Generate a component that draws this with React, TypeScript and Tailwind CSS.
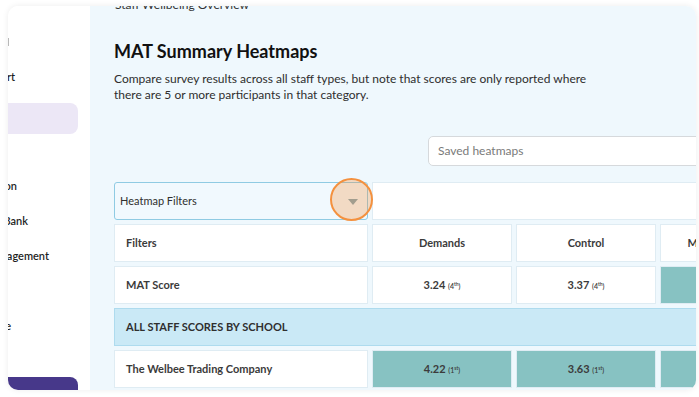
import type { ReactNode } from 'react';

const font = { fontFamily: 'Lato, "Open Sans", sans-serif' };

function SideItem({ label, end }: { label: string; end: number }) {
  return (
    <div className="flex h-[35px] shrink-0 items-center">
      <div className="flex justify-end whitespace-nowrap" style={{ width: end }}>
        <span className="text-[11px] font-semibold text-[#1f1f1f]">{label}</span>
      </div>
    </div>
  );
}

function Cell({
  children,
  className = '',
}: {
  children?: ReactNode;
  className?: string;
}) {
  return (
    <div
      className={`flex h-full shrink-0 items-center border border-[#dfecf3] text-[11px] font-bold text-[#3b3b3b] ${className}`}
    >
      {children}
    </div>
  );
}

function Score({ value, rank, sfx }: { value: string; rank: string; sfx: string }) {
  return (
    <span className="whitespace-nowrap">
      {value}{' '}
      <span className="text-[7px] font-semibold">
        ({rank}
        <sup className="text-[5px]">{sfx}</sup>)
      </span>
    </span>
  );
}

export default function App() {
  return (
    <div className="h-[397px] w-[699px] overflow-hidden bg-white pl-[8px] pt-[6px]" style={font}>
      <div className="flex h-[384px] w-[688px] overflow-hidden rounded-[10px] shadow-[0_0_6px_rgba(0,0,0,0.08)]">
        {/* sidebar */}
        <aside className="flex w-[82px] shrink-0 flex-col bg-white">
          <div className="h-[54px] shrink-0 pt-[32px]">
            <div className="h-[8px] w-[1px] bg-[#b8b8b8]" />
          </div>
          <SideItem label="Report" end={7} />
          <div className="mr-[12px] mt-[8px] h-[31px] shrink-0 rounded-r-[8px] bg-[#ece7f6]" />
          <SideItem label="" end={0} />
          <SideItem label="Action" end={9} />
          <SideItem label="Question Bank" end={20} />
          <SideItem label="Staff Management" end={41} />
          <SideItem label="" end={0} />
          <SideItem label="Invite" end={3} />
          <div className="mr-[12px] mt-[33px] h-[30px] shrink-0 rounded-r-[8px] bg-[#47388a]" />
        </aside>

        {/* main */}
        <main className="min-w-0 flex-1 overflow-hidden bg-[#eff8fd] pl-[24px]">
          <div className="mt-[-9px] whitespace-nowrap pl-[1px] text-[12px] leading-[16px] text-[#333]">
            Staff Wellbeing Overview
          </div>
          <h1 className="mt-[27px] whitespace-nowrap text-[18px] font-bold leading-[22px] text-[#111]">
            MAT Summary Heatmaps
          </h1>
          <p className="mt-[9px] whitespace-nowrap text-[12px] leading-[16px] text-[#2e2e2e]">
            Compare survey results across all staff types, but note that scores are only reported where
            <br />
            there are 5 or more participants in that category.
          </p>

          <div className="ml-[314px] mt-[33px] flex h-[30px] w-[320px] items-center rounded-[5px] border border-[#d6d9dc] bg-white pl-[9px] text-[12px] text-[#7a7a7a]">
            Saved heatmaps
          </div>

          <div className="mt-[16px] flex w-[700px] flex-col gap-[4px]">
            <div className="flex h-[38px] gap-[4px]">
              <div className="relative flex w-[254px] shrink-0 items-center rounded-[3px] border border-[#8fcbe3] bg-[#f1f9fe] pl-[5px] text-[11px] text-[#2f2f2f]">
                Heatmap Filters
                <span className="absolute right-[9px] top-[16px] h-0 w-0 border-x-[5px] border-t-[6px] border-x-transparent border-t-[#7ea3b1]" />
                <span className="absolute right-[-6px] top-[-5px] h-[43px] w-[43px] rounded-full border-2 border-[#f4913f] bg-[#f4913f]/30" />
              </div>
              <div className="h-full flex-1 border border-[#dfecf3] bg-white" />
            </div>

            <div className="flex h-[38px] gap-[4px]">
              <Cell className="w-[254px] bg-white pl-[11px]">Filters</Cell>
              <Cell className="w-[140px] justify-center bg-white">Demands</Cell>
              <Cell className="w-[140px] justify-center bg-white">Control</Cell>
              <Cell className="w-[140px] justify-center bg-white">Manager Support</Cell>
            </div>

            <div className="flex h-[38px] gap-[4px]">
              <Cell className="w-[254px] bg-white pl-[11px]">MAT Score</Cell>
              <Cell className="w-[140px] justify-center bg-white">
                <Score value="3.24" rank="4" sfx="th" />
              </Cell>
              <Cell className="w-[140px] justify-center bg-white">
                <Score value="3.37" rank="4" sfx="th" />
              </Cell>
              <Cell className="w-[140px] justify-center border-[#87c2c2] bg-[#87c2c2]">
                <Score value="3.75" rank="2" sfx="nd" />
              </Cell>
            </div>

            <div className="flex h-[38px] items-center border border-[#aedbee] bg-[#cae9f6] pl-[11px] text-[11px] font-bold uppercase text-[#2f2f2f]">
              All staff scores by school
            </div>

            <div className="flex h-[38px] gap-[4px]">
              <Cell className="w-[254px] bg-white pl-[11px]">The Welbee Trading Company</Cell>
              <Cell className="w-[140px] justify-center border-[#87c2c2] bg-[#87c2c2]">
                <Score value="4.22" rank="1" sfx="st" />
              </Cell>
              <Cell className="w-[140px] justify-center border-[#87c2c2] bg-[#87c2c2]">
                <Score value="3.63" rank="1" sfx="st" />
              </Cell>
              <Cell className="w-[140px] justify-center border-[#87c2c2] bg-[#87c2c2]">
                <Score value="3.91" rank="1" sfx="st" />
              </Cell>
            </div>
          </div>
        </main>
      </div>
    </div>
  );
}
